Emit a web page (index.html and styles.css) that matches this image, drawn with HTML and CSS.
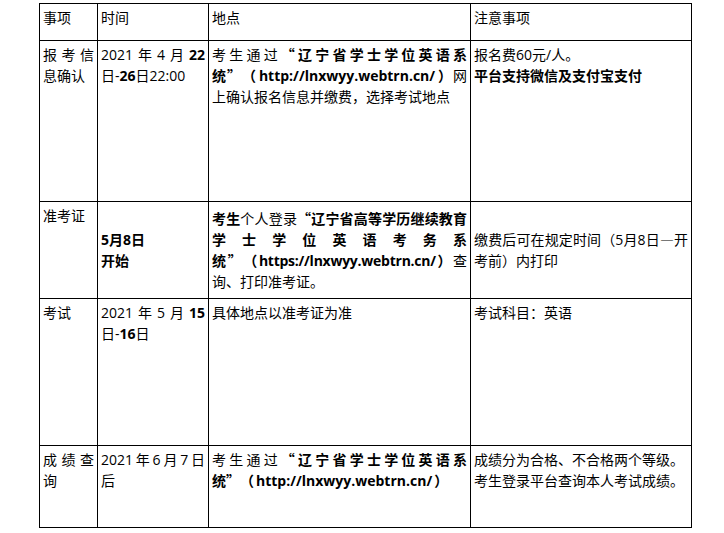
FILE: index.html
```html
<!DOCTYPE html>
<html lang="zh-CN">
<head>
<meta charset="utf-8">
<title>学位英语考试安排</title>
<link rel="stylesheet" href="styles.css">
</head>
<body>
<div class="wrap">
<table class="sched">
  <colgroup>
    <col class="c1"><col class="c2"><col class="c3"><col class="c4">
  </colgroup>
  <tr class="r0">
    <td>事项</td>
    <td>时间</td>
    <td>地点</td>
    <td>注意事项</td>
  </tr>
  <tr class="r1">
    <td>报考信息确认</td>
    <td>2021年4月<b>22</b>日-<b>26</b>日22:00</td>
    <td>考生通过<b><span class="q">“</span>辽宁省学士学位英语系<span class="nw">统<span class="q">”</span>（<span class="url">http://lnxwyy.webtrn.cn/</span>）</span></b>网上确认报名信息并缴费，选择考试地点</td>
    <td>报名费60元/人。<br><b>平台支持微信及支付宝支付</b></td>
  </tr>
  <tr class="r2">
    <td>准考证</td>
    <td class="mid"><b>5月8日<br>开始</b></td>
    <td class="mid"><b>考生</b>个人登录<b><span class="q">“</span>辽宁省高等学历继续教育学士学位英语考务系<span class="nw">统<span class="q">”</span>（<span class="url tight">https://lnxwyy.webtrn.cn/</span>）</span></b>查询、打印准考证。</td>
    <td class="mid">缴费后可在规定时间（5月8日<span class="q">—</span>开考前）内打印</td>
  </tr>
  <tr class="r3">
    <td>考试</td>
    <td>2021年5月<b>15</b>日-<b>16</b>日</td>
    <td>具体地点以准考证为准</td>
    <td>考试科目：英语</td>
  </tr>
  <tr class="r4">
    <td>成绩查询</td>
    <td>2021年6月7日后</td>
    <td>考生通过<b><span class="q">“</span>辽宁省学士学位英语系<span class="nw">统<span class="q">”</span>（<span class="url">http://lnxwyy.webtrn.cn/</span>）</span></b></td>
    <td>成绩分为合格、不合格两个等级。<br>考生登录平台查询本人考试成绩。</td>
  </tr>
</table>
</div>
</body>
</html>
```
FILE: styles.css
```css
html, body {
  margin: 0;
  padding: 0;
  background: #ffffff;
}

.wrap {
  padding: 3px 0 0 39px;
}

.sched {
  border-collapse: collapse;
  table-layout: fixed;
  width: 653px;
  font-family: "Open Sans", "Noto Sans CJK SC", sans-serif;
  font-size: 14px;
  line-height: 21px;
  color: #000000;
  text-spacing-trim: space-all;
}

.c1 { width: 58px; }
.c2 { width: 111px; }
.c3 { width: 262px; }
.c4 { width: 221px; }

.sched td {
  border: 1px solid #000000;
  padding: 3px 3px 0 3px;
  vertical-align: top;
  text-align: justify;
  word-wrap: break-word;
}

.sched td.mid {
  vertical-align: middle;
  padding-top: 0;
}

.sched b {
  font-weight: 700;
}

.q {
  font-family: "Noto Sans CJK SC", sans-serif;
}

.nw {
  white-space: nowrap;
}

.url {
  padding: 0 2px;
}

.url.tight {
  padding: 0;
  letter-spacing: -0.25px;
}

.r0 td { height: 33px; }
.r1 td { height: 157px; }
.r2 td { height: 93px; }
.r3 td { height: 143px; }
.r4 td { height: 78px; }
```
